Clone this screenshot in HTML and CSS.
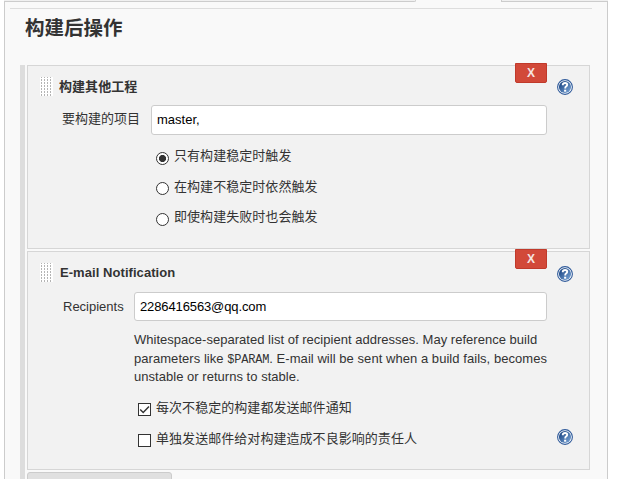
FILE: index.html
```html
<!DOCTYPE html>
<html lang="zh-CN">
<head>
<meta charset="utf-8">
<title>构建后操作</title>
<link rel="stylesheet" href="styles.css">
</head>
<body>
<svg class="defs" width="0" height="0" aria-hidden="true">
  <defs>
    <linearGradient id="blue" x1="0" y1="0" x2="1" y2="1">
      <stop offset="0.15" stop-color="#204a87"/>
      <stop offset="1" stop-color="#7fabdc"/>
    </linearGradient>
    <symbol id="help" viewBox="0 0 16 16">
      <circle cx="8" cy="8" r="7.4" fill="#fff" stroke="#2f5a9a" stroke-width="1.1"/>
      <circle cx="8" cy="8" r="6.1" fill="url(#blue)"/>
      <path d="M5.8 6.3V5.1Q6.2 4 8 4Q10.2 4 10.2 5.8Q10.2 6.8 9 7.5Q8.2 8 8.2 9.5" fill="none" stroke="#fff" stroke-width="1.9"/>
      <path d="M7.1 10.7h2.1v2H7.1z" fill="#fff"/>
    </symbol>
  </defs>
</svg>
<div class="tabs"><div class="tab-left"></div><div class="tab-right"></div></div>
<main class="panel">
  <div class="rule"></div>
  <h1 class="title">构建后操作</h1>
  <div class="steps">
    <section class="card card-build">
      <button class="delete">X</button>
      <header class="head">
        <span class="grip"></span><b class="name">构建其他工程</b>
        <svg class="help"><use href="#help"/></svg>
      </header>
      <div class="field">
        <label class="label">要构建的项目</label>
        <div class="input">master,</div>
      </div>
      <div class="options radios">
        <label class="option"><span class="radio on"></span><span class="text">只有构建稳定时触发</span></label>
        <label class="option"><span class="radio"></span><span class="text">在构建不稳定时依然触发</span></label>
        <label class="option"><span class="radio"></span><span class="text">即使构建失败时也会触发</span></label>
      </div>
    </section>
    <section class="card card-mail">
      <button class="delete">X</button>
      <header class="head">
        <span class="grip"></span><b class="name latin-name">E-mail Notification</b>
        <svg class="help"><use href="#help"/></svg>
      </header>
      <div class="field">
        <label class="label latin-label">Recipients</label>
        <div class="input"><span class="address">2286416563@qq.com</span></div>
      </div>
      <p class="note"><span class="l1">Whitespace-separated list of recipient addresses. May reference build</span><br><span class="l2">parameters like <code>$PARAM</code>. E-mail will be sent when a build fails, becomes</span><br><span class="l3">unstable or returns to stable.</span></p>
      <div class="options checks">
        <label class="option"><span class="check"><svg viewBox="0 0 11 11"><path d="M1.2 5.5L4.2 8.5L10 2.5"/></svg></span><span class="text">每次不稳定的构建都发送邮件通知</span></label>
        <label class="option"><span class="check"></span><span class="text">单独发送邮件给对构建造成不良影响的责任人</span>
          <svg class="help"><use href="#help"/></svg></label>
      </div>
    </section>
    <div class="add"></div>
  </div>
</main>
</body>
</html>
```
FILE: styles.css
```css
* { box-sizing: border-box; }
body {
  margin: 0;
  height: 479px;
  overflow: hidden;
  background: #fff;
  color: #333;
  font: 13px/18px "Liberation Sans", "Noto Sans CJK SC", sans-serif;
}
.defs { display: block; }
.tabs {
  display: flex;
  justify-content: space-between;
  width: 604px;
  height: 2px;
  margin-left: 4px;
  background: #f9f9f9;
}
.tab-left, .tab-right { background: #f0f0f0; border-bottom: 1px solid #ccc; }
.tab-left { width: 412px; border-right: 1px solid #ccc; border-radius: 0 0 2px 0; }
.tab-right { width: 107px; border-left: 1px solid #ccc; }
.panel {
  width: 604px;
  height: 477px;
  margin-left: 4px;
  padding: 6px 15px 0 5px;
  background: #f9f9f9;
  border: solid #ccc;
  border-width: 0 1px;
  overflow: hidden;
}
.rule { height: 1px; background: #ddd; }
.title { margin: 4px 0 0 15px; height: 52px; font-size: 19.5px; line-height: 31px; }
.steps {
  margin-left: 10px;
  padding-left: 2px;
  width: 570px;
  height: 420px;
  border-left: 5px solid #ddd;
}
.card {
  position: relative;
  width: 563px;
  background: #f2f2f2;
  border: 1px solid #d6d6d6;
}
.card-build { height: 184px; margin-bottom: 2px; }
.card-mail { height: 219px; }
.delete {
  position: absolute;
  right: 42px;
  top: -3px;
  width: 32px;
  height: 20px;
  padding: 0;
  border: 1px solid #c03a2b;
  border-radius: 0 0 2px 2px;
  background: #d24939;
  color: #f6e4e0;
  font: bold 12px/18px "Liberation Sans", sans-serif;
}
.head { display: flex; align-items: center; height: 39px; padding: 2px 16px 0 12px; }
.grip {
  width: 13px;
  height: 19px;
  margin-right: 6px;
  background: conic-gradient(from 90deg at 2px 2px, #fff 0 270deg, #b4b4b4 0) -1px -1px / 3px 3px;
}
.latin-name { margin-left: 1px; }
.name { letter-spacing: 0.06px; }
.help { width: 16px; height: 16px; margin-left: auto; flex: none; }
.field { display: flex; height: 30px; padding: 0 42px 0 34px; }
.label { width: 89px; padding-top: 5px; }
.latin-label { width: 72px; padding-left: 1px; }
.input {
  flex: 1;
  padding: 5px;
  border: 1px solid #ccc;
  border-radius: 3px;
  background: #fff;
  color: #000;
}
.address { letter-spacing: -0.12px; }
.options { display: flex; flex-direction: column; }
.option { display: flex; align-items: center; height: 30.5px; }
.text { position: relative; top: -2px; letter-spacing: 0.05px; }
.radios { padding: 8px 0 0 128px; }
.radio {
  width: 13px;
  height: 13px;
  margin-right: 5px;
  border: 1px solid #333;
  border-radius: 50%;
  background: #fff;
}
.radio.on { background: radial-gradient(circle, #333 3.2px, #fff 3.9px); }
.card-mail .head .help { margin-top: 2px; }
.card-mail .field { margin-top: 1px; height: 29px; }
.card-mail .label { padding-top: 6px; }
.note { margin: 0; padding: 10px 0 0 106px; height: 72px; line-height: 18.5px; white-space: nowrap; }
.note code { font: 12px/1 "Liberation Mono", monospace; letter-spacing: -0.2px; }
.l1 { letter-spacing: 0.02px; }
.l2 { letter-spacing: 0.05px; }
.l3 { letter-spacing: 0.03px; }
.checks { padding: 1px 16px 0 110px; }
.checks .option { height: 31px; }
.checks .text { top: -1.5px; }
.checks .help { margin-bottom: 7px; }
.check {
  display: flex;
  width: 13px;
  height: 13px;
  margin-right: 5px;
  border: 1px solid #333;
  background: #fff;
}
.check svg { width: 11px; height: 11px; }
.check path { fill: none; stroke: #333; stroke-width: 1.4; }
.add {
  width: 145px;
  height: 24px;
  margin-top: 2px;
  border: 1px solid #ccc;
  border-radius: 3px;
  background: #e0e0e0;
}
```
